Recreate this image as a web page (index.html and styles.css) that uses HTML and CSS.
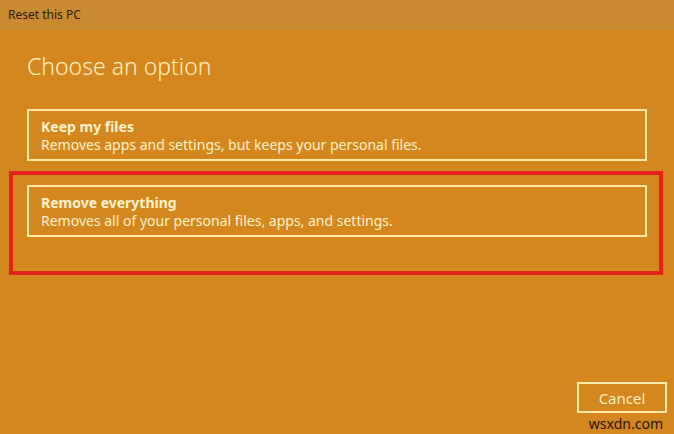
FILE: index.html
```html
<!DOCTYPE html>
<html lang="en">
<head>
    <meta charset="UTF-8">
    <title>Reset this PC</title>
    <link rel="stylesheet" href="styles.css">
</head>
<body>
    <div class="window">
        <div class="title-bar">Reset this PC</div>
        <div class="content">
            <h1>Choose an option</h1>
            <div class="option">
                <div class="option-title">Keep my files</div>
                <div class="option-desc">Removes apps and settings, but keeps your personal files.</div>
            </div>
            <div class="highlight">
                <div class="option">
                    <div class="option-title">Remove everything</div>
                    <div class="option-desc">Removes all of your personal files, apps, and settings.</div>
                </div>
            </div>
        </div>
        <div class="footer">
            <button class="cancel">Cancel</button>
        </div>
        <span class="watermark">wsxdn.com</span>
    </div>
</body>
</html>
```

FILE: styles.css
```css
body {
    margin: 0;
    font-family: "Noto Sans", "Open Sans", sans-serif;
}

.window {
    position: relative;
    width: 674px;
    height: 434px;
    display: flex;
    flex-direction: column;
    background-color: #d4861f;
    overflow: hidden;
}

.title-bar {
    height: 30px;
    padding-left: 8px;
    line-height: 30px;
    font-size: 12px;
    color: #2b1a08;
    background-color: #c98a30;
}

.content {
    flex: 1;
}

h1 {
    margin: 21px 0 0 27px;
    height: 58px;
    font-size: 23px;
    font-weight: 300;
    line-height: 30px;
    color: #fdf1c4;
}

.option {
    box-sizing: border-box;
    width: 620px;
    height: 52px;
    margin-left: 27px;
    padding: 6px 12px;
    border: 2px solid #fbeaa8;
    color: #fdf3cc;
}

.option-title {
    font-size: 14px;
    font-weight: bold;
    line-height: 19px;
}

.option-desc {
    font-size: 14px;
    line-height: 18px;
}

.highlight {
    box-sizing: border-box;
    width: 654px;
    height: 104px;
    margin: 10px 0 0 9px;
    padding: 10px 0 0 14px;
    border: 4px solid #e5211b;
}

.highlight .option {
    margin-left: 0;
}

.footer {
    display: flex;
    justify-content: flex-end;
    padding: 0 7px 21px 0;
}

.cancel {
    width: 90px;
    height: 31px;
    border: 2px solid #fbeaa8;
    background: transparent;
    font-family: "Noto Sans", "Open Sans", sans-serif;
    font-size: 15px;
    color: #fdf1c4;
}

.watermark {
    position: absolute;
    right: 11px;
    bottom: 1px;
    font-size: 14px;
    color: #1e1608;
}
```
